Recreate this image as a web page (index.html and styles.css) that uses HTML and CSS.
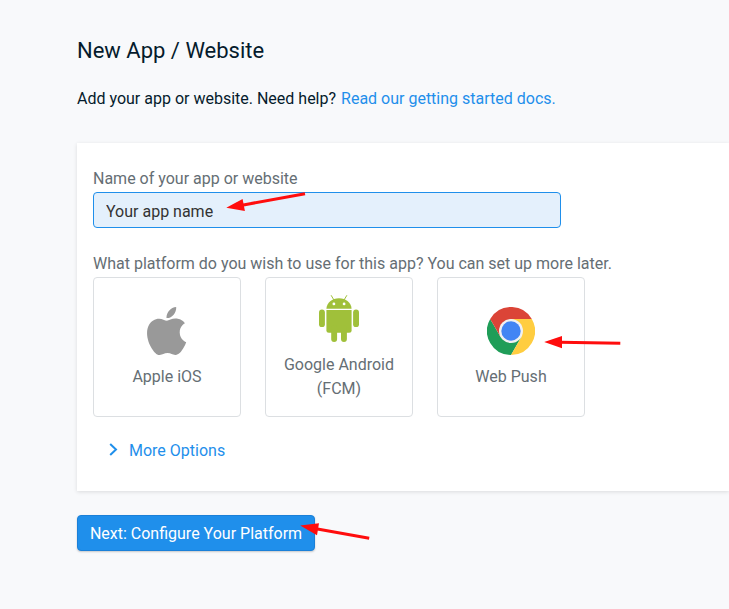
FILE: index.html
```html
<!DOCTYPE html>
<html lang="en">
<head>
<meta charset="utf-8">
<title>New App / Website</title>
<link rel="stylesheet" href="styles.css">
</head>
<body>
<main class="page">
  <h1 class="title">New App / Website</h1>
  <p class="intro">Add your app or website. Need help? <a class="link" href="#">Read our getting started docs.</a></p>
  <section class="panel">
    <label class="label" for="name">Name of your app or website</label>
    <input class="input" id="name" type="text" value="Your app name">
    <p class="label platform-label">What platform do you wish to use for this app? You can set up more later.</p>
    <div class="platforms">
      <div class="platform">
        <svg class="icon" viewBox="0.2 0 24 24" fill="#999"><path d="M12.152 6.896c-.948 0-2.415-1.078-3.960-1.040-2.040.027-3.910 1.183-4.961 3.014-2.117 3.675-.546 9.103 1.519 12.090 1.013 1.454 2.208 3.090 3.792 3.039 1.520-.065 2.090-.987 3.935-.987 1.831 0 2.350.987 3.960.948 1.637-.026 2.676-1.480 3.676-2.948 1.156-1.688 1.636-3.325 1.662-3.415-.039-.013-3.182-1.221-3.220-4.857-.026-3.040 2.480-4.494 2.597-4.559-1.429-2.090-3.623-2.324-4.390-2.376-2-.156-3.675 1.090-4.610 1.090zM15.530 3.830c.843-1.012 1.400-2.427 1.245-3.830-1.207.052-2.662.805-3.532 1.818-.780.896-1.454 2.338-1.273 3.714 1.338.104 2.715-.688 3.559-1.701"/></svg>
        <span>Apple iOS</span>
      </div>
      <div class="platform">
        <svg class="icon" viewBox="0 0 48 48" fill="#a0c03a">
          <path d="M11.4 13.7C11.8 7.8 17 3.300 24 3.300s12.200 4.500 12.600 10.400z"/>
          <path d="M16.300.6l3 5M31.700.6l-3 5" fill="none" stroke="#a0c03a" stroke-linecap="round"/>
          <circle cx="18.900" cy="8.900" r="1.400" fill="#fff"/><circle cx="29.100" cy="8.900" r="1.400" fill="#fff"/>
          <path d="M11.400 15h25.200v20.200a2.500 2.500 0 0 1-2.500 2.500H13.900a2.500 2.500 0 0 1-2.500-2.500z"/>
          <rect x="4" y="14.500" width="5.900" height="17.600" rx="2.950"/><rect x="38.100" y="14.500" width="5.900" height="17.600" rx="2.950"/>
          <rect x="16.200" y="30" width="5.900" height="17" rx="2.950"/><rect x="26" y="30" width="5.900" height="17" rx="2.950"/>
        </svg>
        <span>Google Android (FCM)</span>
      </div>
      <div class="platform">
        <svg class="icon" viewBox="0 0 48 48">
          <path fill="#db4437" d="M3.200 12A24 24 0 0 1 44.800 12H24v12H13.600z"/>
          <path fill="#1f9d58" d="M3.200 12A24 24 0 0 0 24 48L34.400 30 24 24 13.600 30z"/>
          <path fill="#ffcd40" d="M44.800 12A24 24 0 0 1 24 48L34.400 30 24 24V12z"/>
          <path fill="#db4437" d="M3.200 12L13.600 30 24 24V12z"/>
          <circle cx="24" cy="24" r="12" fill="#f1f1f1"/><circle cx="24" cy="24" r="9.700" fill="#4285f4"/>
        </svg>
        <span>Web Push</span>
      </div>
    </div>
    <a class="more" href="#"><svg class="chevron" viewBox="0 0 9 13"><path d="M1.200 1l5.800 5.500L1.200 12" fill="none" stroke="#1f8feb" stroke-width="2"/></svg>More Options</a>
  </section>
  <button class="next" type="button">Next: Configure Your Platform</button>
</main>
<svg class="arrows" viewBox="0 0 729 609" fill="#ff0d0d" stroke="#ff0d0d" stroke-width="3">
  <path d="M305 193.700L242 205.200M620.300 343.200L560 342.300M369.200 538.200L316 528.800"/>
  <path stroke="none" d="M226.300 207.800L242.600 198.900 244.900 211zM544.200 342L562 336V348.200zM300.200 525.600L319 523.200 317 535.200z"/>
</svg>
</body>
</html>
```
FILE: styles.css
```css
* { box-sizing: border-box; }
body {
  margin: 0;
  height: 609px;
  overflow: hidden;
  background: #f8f9fb;
  color: #051b2c;
  font: 16px/24px Roboto, sans-serif;
}
.page { padding: 35px 0 0 77px; }
.title { margin: 0; font-size: 22px; line-height: 32px; font-weight: 400; }
.intro { margin: 20px 0 32px; }
.link, .more { color: #1f8feb; text-decoration: none; }
.link { margin-left: 1px; }
.panel {
  height: 348px;
  padding: 24px 16px 0;
  background: #fff;
  box-shadow: 0 1px 4px rgba(0, 0, 0, 0.12);
}
.label { display: block; margin: 0; color: #656e74; }
.input {
  display: block;
  width: 468px;
  height: 36px;
  margin-top: 1px;
  padding: 2px 12px 0;
  border: 1px solid #1f8feb;
  border-radius: 4px;
  background: #e4f0fc;
  color: #333;
  font: inherit;
}
.platform-label { margin-top: 24px; }
.platforms { display: flex; gap: 24px; margin-top: 1px; }
.platform {
  display: flex;
  flex-direction: column;
  align-items: center;
  justify-content: center;
  gap: 10px;
  width: 148px;
  height: 140px;
  padding: 2px 16px 0;
  border: 1px solid #dcdfe2;
  border-radius: 4px;
  color: #656e74;
  text-align: center;
}
.icon { width: 48px; height: 48px; }
.more { display: flex; align-items: center; gap: 11px; margin: 22px 0 0 16px; }
.chevron { width: 9px; height: 13px; margin-bottom: 3px; }
.next {
  display: block;
  width: 238px;
  height: 36px;
  margin-top: 24px;
  padding: 2px 0 0;
  border: 1px solid #1b80d8;
  border-radius: 4px;
  background: #1f8feb;
  box-shadow: 0 1px 2px rgba(0, 0, 0, 0.2);
  color: #fff;
  font: inherit;
}
.arrows { position: absolute; top: 0; left: 0; width: 729px; height: 609px; pointer-events: none; }
```
